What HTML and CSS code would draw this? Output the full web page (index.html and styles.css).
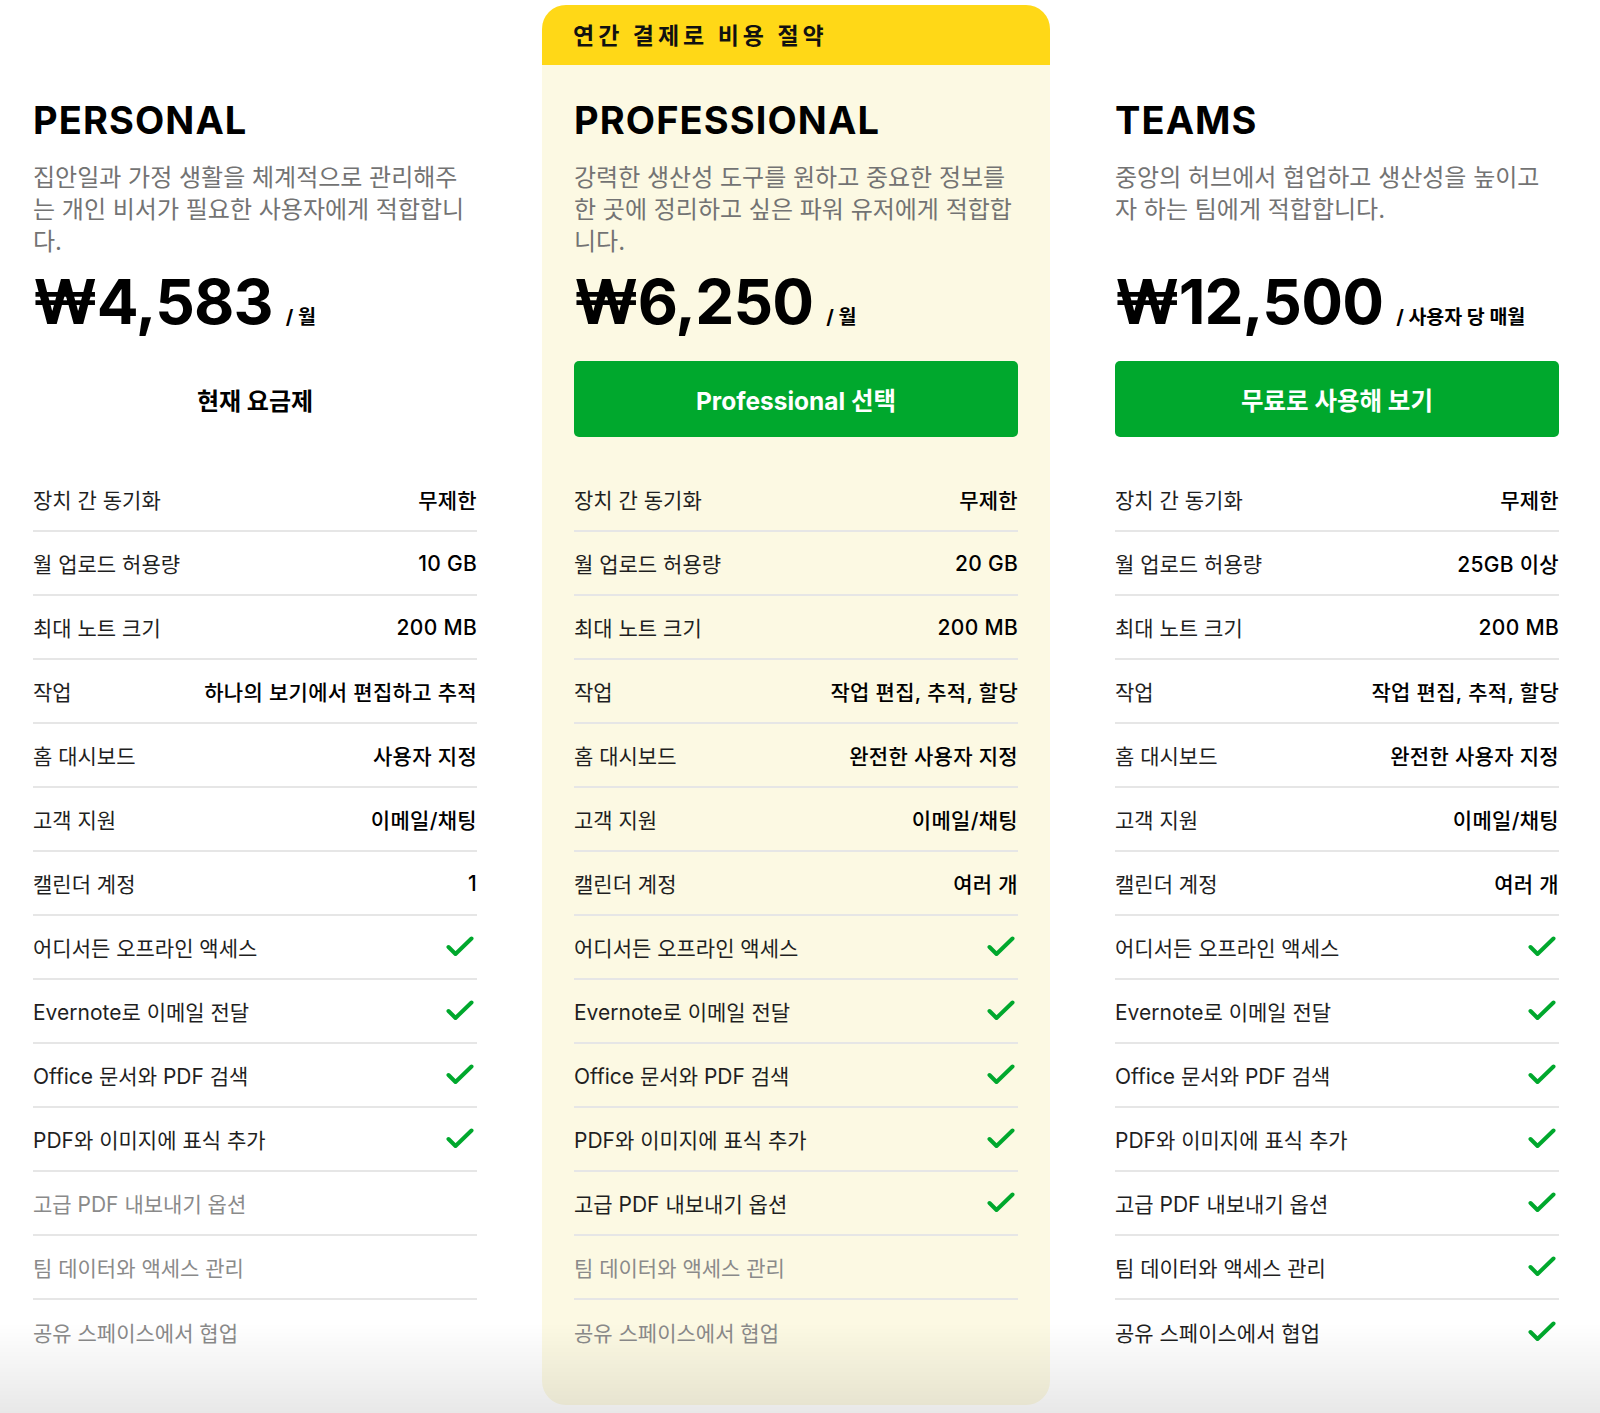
FILE: index.html
```html
<!DOCTYPE html>
<html lang="ko">
<head>
  <meta charset="UTF-8" />
  <meta name="viewport" content="width=device-width, initial-scale=1.0" />
  <title>Evernote 요금제</title>
  <link rel="stylesheet" href="styles.css">
</head>
<body>
  <div class="plans">
    <!-- Personal -->
    <div class="plan">
      <div class="plan-tag"></div>
      <h2 class="plan-name">PERSONAL</h2>
      <p class="plan-desc">집안일과 가정 생활을 체계적으로 관리해주는 개인 비서가 필요한 사용자에게 적합합니다.</p>
      <div class="price-row"><span class="price">₩4,583</span><span class="per">/ 월</span></div>
      <div class="action current">현재 요금제</div>
      <ul class="features">
        <li><span>장치 간 동기화</span><b>무제한</b></li>
        <li><span>월 업로드 허용량</span><b>10 GB</b></li>
        <li><span>최대 노트 크기</span><b>200 MB</b></li>
        <li><span>작업</span><b>하나의 보기에서 편집하고 추적</b></li>
        <li><span>홈 대시보드</span><b>사용자 지정</b></li>
        <li><span>고객 지원</span><b>이메일/채팅</b></li>
        <li><span>캘린더 계정</span><b>1</b></li>
        <li><span>어디서든 오프라인 액세스</span><svg class="check" viewBox="0 0 28 22"><polyline points="2.5,11 9.5,18 25.5,2.5"/></svg></li>
        <li><span>Evernote로 이메일 전달</span><svg class="check" viewBox="0 0 28 22"><polyline points="2.5,11 9.5,18 25.5,2.5"/></svg></li>
        <li><span>Office 문서와 PDF 검색</span><svg class="check" viewBox="0 0 28 22"><polyline points="2.5,11 9.5,18 25.5,2.5"/></svg></li>
        <li><span>PDF와 이미지에 표식 추가</span><svg class="check" viewBox="0 0 28 22"><polyline points="2.5,11 9.5,18 25.5,2.5"/></svg></li>
        <li class="off"><span>고급 PDF 내보내기 옵션</span></li>
        <li class="off"><span>팀 데이터와 액세스 관리</span></li>
        <li class="off"><span>공유 스페이스에서 협업</span></li>
      </ul>
    </div>

    <!-- Professional -->
    <div class="plan plan-pro">
      <div class="plan-tag">연간 결제로 비용 절약</div>
      <h2 class="plan-name">PROFESSIONAL</h2>
      <p class="plan-desc">강력한 생산성 도구를 원하고 중요한 정보를 한 곳에 정리하고 싶은 파워 유저에게 적합합니다.</p>
      <div class="price-row"><span class="price">₩6,250</span><span class="per">/ 월</span></div>
      <a class="action btn" href="#">Professional 선택</a>
      <ul class="features">
        <li><span>장치 간 동기화</span><b>무제한</b></li>
        <li><span>월 업로드 허용량</span><b>20 GB</b></li>
        <li><span>최대 노트 크기</span><b>200 MB</b></li>
        <li><span>작업</span><b>작업 편집, 추적, 할당</b></li>
        <li><span>홈 대시보드</span><b>완전한 사용자 지정</b></li>
        <li><span>고객 지원</span><b>이메일/채팅</b></li>
        <li><span>캘린더 계정</span><b>여러 개</b></li>
        <li><span>어디서든 오프라인 액세스</span><svg class="check" viewBox="0 0 28 22"><polyline points="2.5,11 9.5,18 25.5,2.5"/></svg></li>
        <li><span>Evernote로 이메일 전달</span><svg class="check" viewBox="0 0 28 22"><polyline points="2.5,11 9.5,18 25.5,2.5"/></svg></li>
        <li><span>Office 문서와 PDF 검색</span><svg class="check" viewBox="0 0 28 22"><polyline points="2.5,11 9.5,18 25.5,2.5"/></svg></li>
        <li><span>PDF와 이미지에 표식 추가</span><svg class="check" viewBox="0 0 28 22"><polyline points="2.5,11 9.5,18 25.5,2.5"/></svg></li>
        <li><span>고급 PDF 내보내기 옵션</span><svg class="check" viewBox="0 0 28 22"><polyline points="2.5,11 9.5,18 25.5,2.5"/></svg></li>
        <li class="off"><span>팀 데이터와 액세스 관리</span></li>
        <li class="off"><span>공유 스페이스에서 협업</span></li>
      </ul>
    </div>

    <!-- Teams -->
    <div class="plan">
      <div class="plan-tag"></div>
      <h2 class="plan-name">TEAMS</h2>
      <p class="plan-desc">중앙의 허브에서 협업하고 생산성을 높이고자 하는 팀에게 적합합니다.</p>
      <div class="price-row"><span class="price">₩12,500</span><span class="per">/ 사용자 당 매월</span></div>
      <a class="action btn" href="#">무료로 사용해 보기</a>
      <ul class="features">
        <li><span>장치 간 동기화</span><b>무제한</b></li>
        <li><span>월 업로드 허용량</span><b>25GB 이상</b></li>
        <li><span>최대 노트 크기</span><b>200 MB</b></li>
        <li><span>작업</span><b>작업 편집, 추적, 할당</b></li>
        <li><span>홈 대시보드</span><b>완전한 사용자 지정</b></li>
        <li><span>고객 지원</span><b>이메일/채팅</b></li>
        <li><span>캘린더 계정</span><b>여러 개</b></li>
        <li><span>어디서든 오프라인 액세스</span><svg class="check" viewBox="0 0 28 22"><polyline points="2.5,11 9.5,18 25.5,2.5"/></svg></li>
        <li><span>Evernote로 이메일 전달</span><svg class="check" viewBox="0 0 28 22"><polyline points="2.5,11 9.5,18 25.5,2.5"/></svg></li>
        <li><span>Office 문서와 PDF 검색</span><svg class="check" viewBox="0 0 28 22"><polyline points="2.5,11 9.5,18 25.5,2.5"/></svg></li>
        <li><span>PDF와 이미지에 표식 추가</span><svg class="check" viewBox="0 0 28 22"><polyline points="2.5,11 9.5,18 25.5,2.5"/></svg></li>
        <li><span>고급 PDF 내보내기 옵션</span><svg class="check" viewBox="0 0 28 22"><polyline points="2.5,11 9.5,18 25.5,2.5"/></svg></li>
        <li><span>팀 데이터와 액세스 관리</span><svg class="check" viewBox="0 0 28 22"><polyline points="2.5,11 9.5,18 25.5,2.5"/></svg></li>
        <li><span>공유 스페이스에서 협업</span><svg class="check" viewBox="0 0 28 22"><polyline points="2.5,11 9.5,18 25.5,2.5"/></svg></li>
      </ul>
    </div>
  </div>

  <div class="fade"></div>
</body>
</html>
```

FILE: styles.css
```css
* {
  margin: 0;
  padding: 0;
  box-sizing: border-box;
}

body {
  background: #fff;
  color: #1a1a1a;
  font-family: Inter, 'Noto Sans CJK KR', sans-serif;
}

.plans {
  display: flex;
  gap: 33px;
  padding: 5px 0 0 1px;
}

/* Plan column */
.plan {
  flex: none;
  width: 508px;
  padding: 0 32px 41px;
}

.plan-pro {
  background: #fcf9e3;
  border-radius: 24px;
  overflow: hidden;
}

.plan-tag {
  height: 60px;
  margin: 0 -32px;
  padding: 0 0 3px 31px;
  display: flex;
  align-items: center;
  font-size: 23px;
  font-weight: 700;
  letter-spacing: 4px;
  color: #111;
}

.plan-pro .plan-tag {
  background: #ffd817;
}

.plan-name {
  margin-top: 32px;
  font-size: 38px;
  line-height: 46px;
  font-weight: 700;
  letter-spacing: 1.1px;
  color: #000;
}

.plan-desc {
  margin-top: 19px;
  min-height: 96px;
  max-width: 442px;
  font-size: 24px;
  line-height: 32px;
  color: #737373;
}

.price-row {
  margin-top: 12px;
  display: flex;
  align-items: baseline;
  gap: 13px;
}

.price {
  font-size: 62px;
  line-height: 64px;
  font-weight: 700;
  letter-spacing: -0.8px;
  color: #000;
}

.per {
  font-size: 19.5px;
  font-weight: 700;
  color: #000;
}

/* Call to action */
.action {
  margin-top: 27px;
  height: 76px;
  display: flex;
  align-items: center;
  justify-content: center;
  font-weight: 700;
  text-decoration: none;
}

.current {
  font-size: 24px;
  color: #000;
}

.btn {
  background: #00a82d;
  border-radius: 5px;
  color: #fff;
  font-size: 24.5px;
}

/* Feature list */
.features {
  list-style: none;
  margin-top: 31px;
}

.features li {
  height: 64px;
  display: flex;
  align-items: center;
  justify-content: space-between;
  border-bottom: 2px solid #e6e6e6;
  font-size: 21px;
  color: #1f1f1f;
}

.features li:last-child {
  border-bottom: none;
}

.features b {
  font-weight: 500;
  letter-spacing: 0.3px;
  color: #000;
}

.features li.off {
  color: #8a8a8a;
}

.check {
  width: 28px;
  height: 22px;
  margin-right: 3px;
}

.check polyline {
  fill: none;
  stroke: #00a82d;
  stroke-width: 4;
  stroke-linecap: round;
  stroke-linejoin: round;
}

/* bottom fade */
.fade {
  position: fixed;
  left: 0;
  right: 0;
  bottom: 0;
  height: 90px;
  background: linear-gradient(to bottom, rgba(0, 0, 0, 0), rgba(0, 0, 0, 0.09));
  pointer-events: none;
}
```
